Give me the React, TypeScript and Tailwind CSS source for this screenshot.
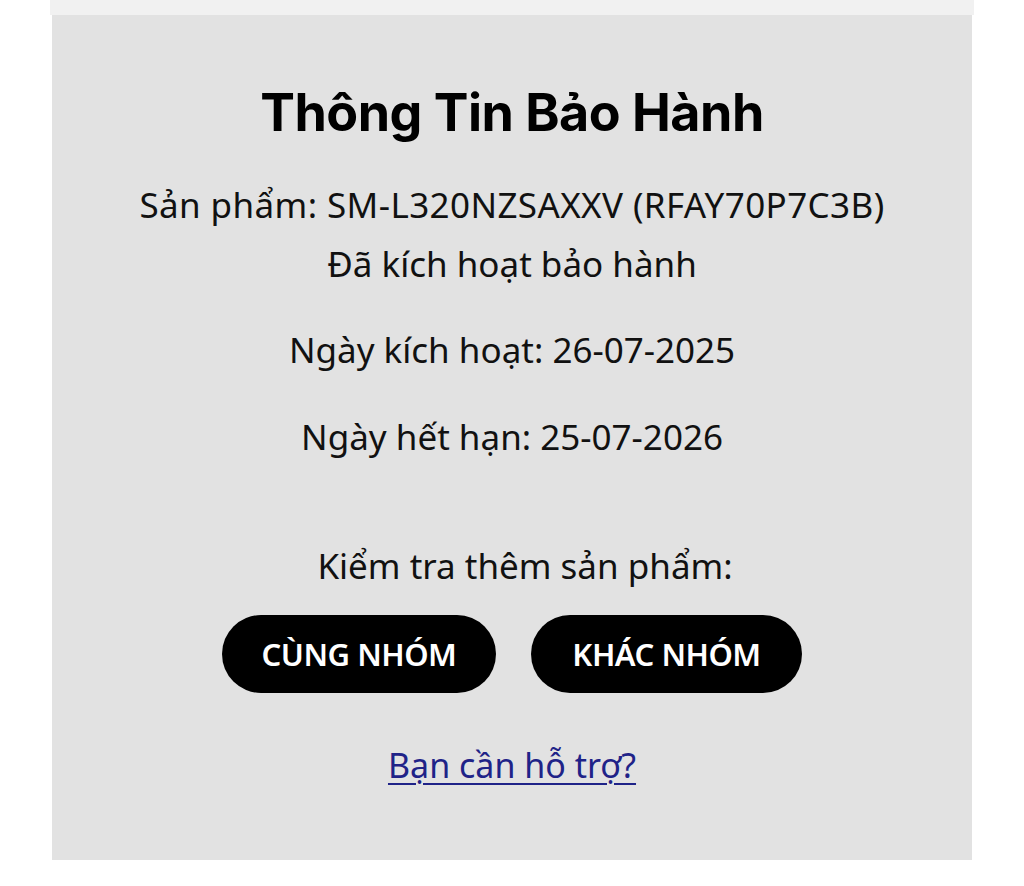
import React from 'react';

const DETAILS = [
  { text: 'Sản phẩm: SM-L320NZSAXXV (RFAY70P7C3B)', className: 'mt-[36px] tracking-[0.4px]' },
  { text: 'Đã kích hoạt bảo hành', className: 'mt-[11px]' },
  { text: 'Ngày kích hoạt: 26-07-2025', className: 'mt-[38px]' },
  { text: 'Ngày hết hạn: 25-07-2026', className: 'mt-[39px]' },
];

const BUTTONS = [
  { label: 'CÙNG NHÓM', width: 'w-[274px]' },
  { label: 'KHÁC NHÓM', width: 'w-[271px]' },
];

export default function App() {
  return (
    <div className="min-h-[886px] bg-white font-['Noto_Sans',sans-serif] text-[#111]">
      <div className="mx-auto w-[924px] h-[15px] bg-[#f1f1f1]" />
      <section className="mx-auto w-[920px] bg-[#e2e2e2] pt-[66px] pb-[71px] flex flex-col items-center text-center">
        <h1 className="font-['Inter',sans-serif] font-bold text-[52px] leading-[64px] tracking-[-0.5px] text-black">
          Thông Tin Bảo Hành
        </h1>

        {DETAILS.map((d, i) => (
          <p key={i} className={`${d.className} text-[35px] leading-[48px]`}>
            {d.text}
          </p>
        ))}

        <p className="mt-[81px] pl-[26px] text-[35px] leading-[48px]">Kiểm tra thêm sản phẩm:</p>

        <div className="mt-[25px] flex gap-[35px]">
          {BUTTONS.map((b) => (
            <button
              key={b.label}
              className={`${b.width} h-[78px] rounded-full bg-black text-white font-semibold text-[31px] tracking-[-0.5px]`}
            >
              {b.label}
            </button>
          ))}
        </div>

        <a href="#" className="mt-[48px] text-[34px] leading-[48px] text-[#1f2388] underline underline-offset-[5px] decoration-[2px]">
          Bạn cần hỗ trợ?
        </a>
      </section>
    </div>
  );
}
